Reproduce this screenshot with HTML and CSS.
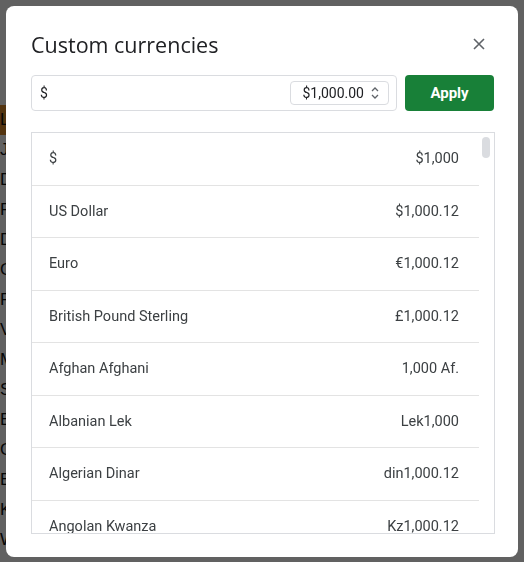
FILE: index.html
```html
<!DOCTYPE html>
<html lang="en">
<head>
    <meta charset="UTF-8">
    <title>Custom currencies</title>
    <link rel="stylesheet" href="styles.css">
</head>
<body>
    <div class="sheet">
        <div class="sheet-row head"><span class="cell">L</span><span class="cell"></span><span class="cell"></span></div>
        <div class="sheet-row"><span class="cell">J</span><span class="cell"></span><span class="cell"></span></div>
        <div class="sheet-row"><span class="cell">D</span><span class="cell"></span><span class="cell"></span></div>
        <div class="sheet-row"><span class="cell">F</span><span class="cell"></span><span class="cell"></span></div>
        <div class="sheet-row"><span class="cell">D</span><span class="cell"></span><span class="cell"></span></div>
        <div class="sheet-row"><span class="cell">C</span><span class="cell"></span><span class="cell"></span></div>
        <div class="sheet-row"><span class="cell">F</span><span class="cell"></span><span class="cell"></span></div>
        <div class="sheet-row"><span class="cell">V</span><span class="cell"></span><span class="cell"></span></div>
        <div class="sheet-row"><span class="cell">M</span><span class="cell"></span><span class="cell"></span></div>
        <div class="sheet-row"><span class="cell">S</span><span class="cell"></span><span class="cell"></span></div>
        <div class="sheet-row"><span class="cell">E</span><span class="cell"></span><span class="cell"></span></div>
        <div class="sheet-row"><span class="cell">C</span><span class="cell"></span><span class="cell"></span></div>
        <div class="sheet-row"><span class="cell">E</span><span class="cell"></span><span class="cell"></span></div>
        <div class="sheet-row"><span class="cell">K</span><span class="cell"></span><span class="cell"></span></div>
        <div class="sheet-row"><span class="cell">W</span><span class="cell"></span><span class="cell"></span></div>
    </div>
    <div class="scrim"></div>

    <div class="dialog">
        <div class="dialog-header">
            <h1 class="dialog-title">Custom currencies</h1>
            <button class="btn-close" aria-label="Close">
                <svg width="12" height="12" viewBox="0 0 12 12"><path d="M1 1L11 11M11 1L1 11" stroke="#5f6368" stroke-width="1.6" fill="none"/></svg>
            </button>
        </div>

        <div class="format-row">
            <div class="symbol-input">
                <span class="symbol">$</span>
                <div class="format-select">
                    <span>$1,000.00</span>
                    <svg width="8" height="14" viewBox="0 0 8 14"><path d="M1 5L4 2L7 5M1 9L4 12L7 9" stroke="#5f6368" stroke-width="1.3" fill="none"/></svg>
                </div>
            </div>
            <button class="btn-apply">Apply</button>
        </div>

        <div class="currency-list">
            <div class="rows">
                <div class="row"><span>$</span><span>$1,000</span></div>
                <div class="row"><span>US Dollar</span><span>$1,000.12</span></div>
                <div class="row"><span>Euro</span><span>€1,000.12</span></div>
                <div class="row"><span>British Pound Sterling</span><span>£1,000.12</span></div>
                <div class="row"><span>Afghan Afghani</span><span>1,000 Af.</span></div>
                <div class="row"><span>Albanian Lek</span><span>Lek1,000</span></div>
                <div class="row"><span>Algerian Dinar</span><span>din1,000.12</span></div>
                <div class="row"><span>Angolan Kwanza</span><span>Kz1,000.12</span></div>
            </div>
            <div class="scroll-track"><div class="scroll-thumb"></div></div>
        </div>
    </div>
</body>
</html>
```

FILE: styles.css
```css
/* page behind the dialog */
body {
    margin: 0;
    font-family: Roboto, Arial, sans-serif;
    background-color: #ffffff;
    overflow: hidden;
}

.sheet {
    padding-top: 105px;
}

.sheet-row {
    display: grid;
    grid-template-columns: 138px 202px 1fr;
    height: 30px;
}

.cell {
    font-family: Arial, "Liberation Sans", sans-serif;
    font-size: 17px;
    line-height: 30px;
    color: #111;
}

.cell:nth-child(1),
.cell:nth-child(2) {
    border-right: 2px solid #3a5ea8;
}

.head .cell:first-child {
    background-color: #d98a2b;
}

.scrim {
    position: fixed;
    inset: 0;
    background-color: rgba(0, 0, 0, 0.62);
}

/* dialog */
.dialog {
    position: fixed;
    left: 6px;
    top: 6px;
    width: 512px;
    height: 551px;
    box-sizing: border-box;
    padding: 0 24px 0 25px;
    background-color: #fff;
    border-radius: 8px;
    overflow: hidden;
    display: flex;
    flex-direction: column;
}

.dialog-header {
    display: flex;
    align-items: center;
    justify-content: space-between;
    height: 69px;
}

.dialog-title {
    margin: 0;
    font-family: "Open Sans", Roboto, sans-serif;
    font-size: 21.5px;
    font-weight: 400;
    color: #202124;
    padding-top: 7px;
}

.btn-close {
    background: none;
    border: none;
    padding: 0;
    width: 12px;
    height: 12px;
    margin-right: 9px;
    margin-top: 7px;
    display: flex;
}

.format-row {
    display: flex;
    gap: 8px;
    height: 36px;
}

.symbol-input {
    flex: 1;
    display: flex;
    align-items: center;
    justify-content: space-between;
    border: 1px solid #dadce0;
    border-radius: 4px;
    padding: 0 7px 0 8px;
}

.symbol {
    font-size: 14px;
    color: #202124;
}

.format-select {
    display: flex;
    align-items: center;
    gap: 7px;
    height: 22px;
    padding: 0 9px 0 11px;
    border: 1px solid #dadce0;
    border-radius: 4px;
    font-size: 14px;
    color: #202124;
}

.btn-apply {
    width: 89px;
    border: none;
    border-radius: 4px;
    background-color: #188038;
    color: #fff;
    font-family: Roboto, Arial, sans-serif;
    font-size: 15px;
    font-weight: 700;
}

.currency-list {
    margin-top: 21px;
    width: 464px;
    height: 402px;
    box-sizing: border-box;
    border: 1px solid #dadce0;
    display: flex;
    overflow: hidden;
}

.rows {
    flex: 1;
}

.row {
    display: flex;
    justify-content: space-between;
    align-items: center;
    height: 52.5px;
    box-sizing: border-box;
    padding: 0 20px 0 17px;
    border-bottom: 1px solid #e3e3e3;
    font-size: 14.5px;
    color: #3c4043;
}

.scroll-track {
    width: 15px;
    padding-top: 4px;
}

.scroll-thumb {
    width: 8px;
    height: 21px;
    margin-left: 3px;
    border-radius: 4px;
    background-color: #dadce0;
}
```
